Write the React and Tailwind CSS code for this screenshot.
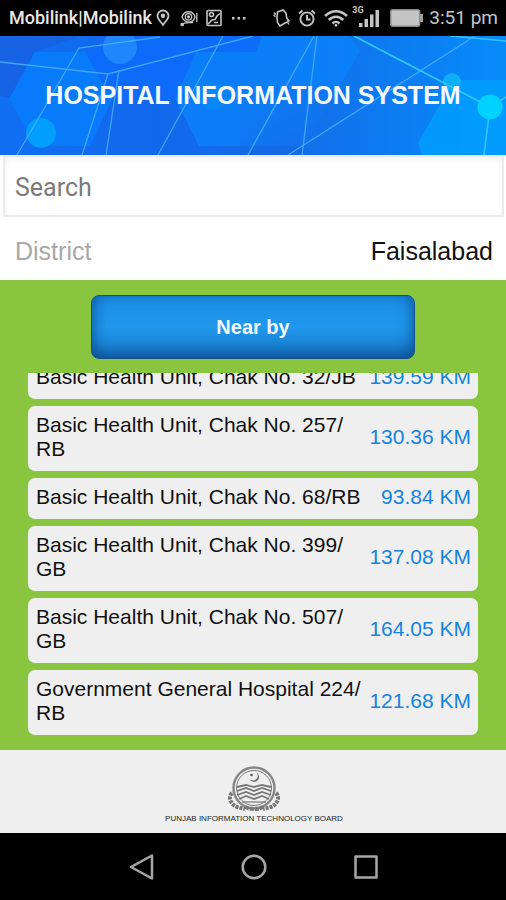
import React, { useLayoutEffect, useRef, useState } from 'react';

const hospitals = [
    { name: 'Basic Health Unit, Chak No. 32/JB', distance: '139.59 KM' },
    { name: 'Basic Health Unit, Chak No. 257/ RB', distance: '130.36 KM' },
    { name: 'Basic Health Unit, Chak No. 68/RB', distance: '93.84 KM' },
    { name: 'Basic Health Unit, Chak No. 399/ GB', distance: '137.08 KM' },
    { name: 'Basic Health Unit, Chak No. 507/ GB', distance: '164.05 KM' },
    { name: 'Government General Hospital 224/ RB', distance: '121.68 KM' },
];

const StatusBar = () => (
    <div className="flex h-9 shrink-0 items-center justify-between bg-black pl-[9px] pr-2 font-['Roboto',sans-serif] text-[#c4c4c4]">
        <div className="flex items-center">
            <span className="text-[18px] leading-6 font-medium text-[#e8e8e8]">Mobilink|Mobilink</span>
            <svg className="ml-1 h-[18px] w-[14px]" viewBox="0 0 14 18" fill="none" stroke="currentColor" strokeWidth="1.8">
                <path d="M7 16C5 13 1.500 10 1.500 7a5.500 5.500 0 0 1 11 0C12.500 10 9 13 7 16z" />
                <circle cx="7" cy="6.800" r="1.300" fill="currentColor" />
            </svg>
            <svg className="ml-2.5 h-[18px] w-[18px]" viewBox="0 0 18 18" fill="none" stroke="currentColor" strokeWidth="1.300">
                <path d="M2 8c2-7 11-7 13 0-2 7-10 6.500-13 0z" />
                <circle cx="8.500" cy="7.800" r="3.200" />
                <circle cx="8.500" cy="7.800" r="1" fill="currentColor" />
                <path d="M16.800 4v9M2 15.500c2-2.500 6-1.500 11-2" />
                <circle cx="2.200" cy="15.500" r="1.200" fill="currentColor" />
            </svg>
            <svg className="ml-2 h-[18px] w-4" viewBox="0 0 16 18" fill="none" stroke="currentColor" strokeWidth="1.600">
                <rect x="1" y="1.500" width="14" height="15" rx="1" />
                <circle cx="5.500" cy="5.500" r="2" />
                <path d="M2 15l4-4 3-.5 2-3.500L14 4.500M8 13.500h4" />
            </svg>
            <svg className="ml-2.5 h-[3px] w-[14px]" viewBox="0 0 14 3" fill="currentColor">
                <rect width="2.500" height="2.500" />
                <rect x="5.500" width="2.500" height="2.500" />
                <rect x="11" width="2.500" height="2.500" />
            </svg>
        </div>
        <div className="flex items-center">
            <svg className="h-[18px] w-[17px]" viewBox="0 0 17 18" fill="none" stroke="currentColor" strokeWidth="1.600">
                <path d="M4.500 3 10 1l3 3 .5 4 2 4.500L12 14l-5 3-2.500-3.500L4 9z" />
                <path d="M1 3.500 2.500 5 1 6.500 2.500 8M14.500 10l1.500 1.500-1.500 2 1.500 2" strokeWidth="1.200" />
            </svg>
            <svg className="ml-2 h-[18px] w-[18px]" viewBox="0 0 18 18" fill="none" stroke="currentColor" strokeWidth="1.900">
                <circle cx="9" cy="10" r="6.600" />
                <path d="M9 6v4.500h3.500M1 4.500 4.500 1.500M17 4.500l-3.500-3" />
            </svg>
            <svg className="ml-2 h-[18px] w-6" viewBox="0 0 24 18" fill="none" stroke="currentColor" strokeWidth="2.500">
                <path d="M1 7c6.500-6.500 15.500-6.500 22 0M4.800 11c4.300-4.300 10.100-4.300 14.400 0M8.500 14.500c2-2 5-2 7 0" />
                <circle cx="12" cy="16.300" r="1.400" fill="currentColor" stroke="none" />
            </svg>
            <div className="relative ml-1 h-6 w-7">
                <span className="absolute -top-0.5 left-0 text-[9px] leading-3 font-bold">3G</span>
                <svg className="h-full w-full" viewBox="0 0 28 24" fill="currentColor">
                    <path d="M7 17h3.500v4H7zM12.500 13h3.500v8h-3.500zM18 8.500h3.500v12.500H18zM23.500 4h3.500v17h-3.500z" />
                </svg>
            </div>
            <svg className="ml-2.5 h-[18px] w-[33px]" viewBox="0 0 33 18">
                <rect x=".7" y=".7" width="29" height="16.600" rx="2" fill="#c4c4c4" stroke="#8b8b8b" strokeWidth="1.400" />
                <path d="M30 5h3v8h-3z" fill="#a0a0a0" />
            </svg>
            <span className="ml-1.5 text-[19px] leading-6">3:51 pm</span>
        </div>
    </div>
);

const Header = () => (
    <header className="relative flex h-[119px] shrink-0 items-center justify-center overflow-hidden bg-[#0b6cf0] pb-0.5">
        <svg className="absolute inset-0 h-full w-full" viewBox="0 0 506 119" preserveAspectRatio="xMidYMid slice" fill="none">
            <defs>
                <linearGradient id="sky" x1="0" y1="0" x2="1" y2="0">
                    <stop offset="0" stopColor="#0f6ff2" />
                    <stop offset=".3" stopColor="#1268ec" />
                    <stop offset=".55" stopColor="#146ce8" />
                    <stop offset=".8" stopColor="#0c7df2" />
                    <stop offset="1" stopColor="#068cfa" />
                </linearGradient>
                <linearGradient id="shade" x1="0" y1="0" x2="1" y2="1">
                    <stop offset="0" stopColor="#1766e2" stopOpacity="0" />
                    <stop offset="1" stopColor="#1766e2" stopOpacity=".7" />
                </linearGradient>
            </defs>
            <rect width="506" height="119" fill="url(#sky)" />
            <path d="M0 0h80L35 16 10 62 0 60z" fill="#1a5fe0" opacity=".7" />
            <path d="M85 16 140 0h122l-6 16h-60l-21 47-63 0z" fill="#0a6cff" opacity=".7" />
            <path d="M35 16h50l27 47-22 47H37L9 63z" fill="#0580ff" opacity=".75" />
            <path d="M196 16h60l6-16h88l10 15-55 95H199l-24-47z" fill="#0a84fb" opacity=".75" />
            <path d="M240 50h100l-40 69h-60z" fill="url(#shade)" />
            <path d="M446 58l8-14h52v75h-84l-4-12z" fill="#00a0ff" opacity=".75" />
            <circle cx="120" cy="11" r="17" fill="#2f97ff" opacity=".6" />
            <circle cx="41" cy="97" r="15" fill="#00a8ff" opacity=".8" />
            <circle cx="213" cy="60" r="14" fill="#0c8cf8" opacity=".6" />
            <circle cx="452" cy="46" r="9" fill="#10b4fa" opacity=".85" />
            <g stroke="#4db4ff" strokeWidth="1.300" opacity=".8">
                <path d="M0 26 108 38 253 0M17 119 79 12 160 1M108 38 82 119M119 34l-13 85M223 0l-65 119M314 0l-66 119M317 0l-15 119M288 119 475 0" />
            </g>
            <g stroke="#31c5ff" strokeWidth="1.700">
                <path d="M354 0l136 71 16-10M490 71l-6 48M450 0l56 5" />
            </g>
            <circle cx="490" cy="71" r="12.500" fill="#00d2ff" />
        </svg>
        <h1 className="relative text-[25px] leading-8 font-bold text-[#f4f8ff]">HOSPITAL INFORMATION SYSTEM</h1>
    </header>
);

const HospitalList = () => {
    const listRef = useRef(null);

    useLayoutEffect(() => {
        listRef.current.scrollTop = listRef.current.scrollHeight;
    }, []);

    return (
        <ul ref={listRef} className="flex min-h-0 flex-1 flex-col gap-[7px] overflow-y-auto [scrollbar-width:none]">
            {hospitals.map((hospital) => (
                <li
                    key={hospital.name}
                    className="flex shrink-0 items-center justify-between rounded-[7px] bg-[#efefef] pt-[7px] pr-[7px] pb-2.5 pl-2 text-[21px] leading-6"
                >
                    <span className="max-w-[332px] text-[#111111]">{hospital.name}</span>
                    <span className="shrink-0 text-[#1683e0]">{hospital.distance}</span>
                </li>
            ))}
        </ul>
    );
};

const Emblem = () => (
    <svg className="h-[46px] w-[52px]" viewBox="0 0 52 46" fill="none" stroke="#777">
        <circle cx="26" cy="22" r="20.500" strokeWidth="2.400" stroke="#858585" />
        <circle cx="26" cy="22" r="17.500" strokeWidth="1" />
        <path d="M28.500 6.500a5 5 0 1 1-7 6.500 4.500 4.500 0 0 0 7-6.500z" fill="#666" stroke="none" />
        <circle cx="23.500" cy="9" r="1.300" fill="#555" stroke="none" />
        <path d="M9 21l9-2 8 2 8-2 9 2M9 25l9-3 8 3 8-3 9 3M9 29l9-3 8 3 8-3 9 3M11 33l7-3 8 3 8-3 7 3" strokeWidth="1.800" />
        <path d="M14 36h24" strokeWidth="1.200" />
        <path d="M4 27c-4 4-2 11 5 14l8 2M48 27c4 4 2 11-5 14l-8 2" strokeWidth="4" strokeDasharray="3 1" />
        <path d="M17 41q9 4 18 0" strokeWidth="4" strokeDasharray="4 1" />
    </svg>
);

const NavBar = () => (
    <nav className="grid h-[67px] shrink-0 grid-cols-3 items-center bg-black pr-[84px] pl-[86px] text-[#a6a6a6]">
        <button type="button" aria-label="Back" className="mx-auto">
            <svg className="h-7 w-7" viewBox="0 0 28 28" fill="none" stroke="currentColor" strokeWidth="2.500" strokeLinejoin="round">
                <path d="M24 2.500v23L3 14z" />
            </svg>
        </button>
        <button type="button" aria-label="Home" className="mx-auto">
            <svg className="h-7 w-7" viewBox="0 0 28 28" fill="none" stroke="currentColor" strokeWidth="2.500">
                <circle cx="14" cy="14" r="11.300" />
            </svg>
        </button>
        <button type="button" aria-label="Recent apps" className="mx-auto">
            <svg className="h-7 w-7" viewBox="0 0 28 28" fill="none" stroke="currentColor" strokeWidth="2.500" strokeLinejoin="round">
                <rect x="3.500" y="3.500" width="21" height="21" />
            </svg>
        </button>
    </nav>
);

const App = () => {
    const [search, setSearch] = useState('');
    const [district, setDistrict] = useState('Faisalabad');

    return (
        <div className="flex h-screen flex-col bg-white font-['Liberation_Sans',Arial,sans-serif]">
            <StatusBar />
            <Header />
            <div className="shrink-0 pr-0.5 pl-[3px]">
                <input
                    type="text"
                    aria-label="Search"
                    placeholder="Search"
                    value={search}
                    onChange={(e) => setSearch(e.target.value)}
                    className="block h-[62px] w-full border-2 border-[#ebebeb] bg-white px-2.5 pt-0.5 font-['Roboto',sans-serif] text-[25px] text-[#333333] shadow-[inset_0_2px_6px_#f0f0f0] outline-none placeholder:text-[#7b7b7b]"
                />
            </div>
            <div className="flex h-[63px] shrink-0 items-center justify-between pt-1 pr-[13px] pl-[15px] text-[25px] leading-8">
                <label htmlFor="district" className="text-[#a8a8a8]">District</label>
                <select
                    id="district"
                    value={district}
                    onChange={(e) => setDistrict(e.target.value)}
                    className="appearance-none bg-transparent text-right text-[#111111] outline-none"
                >
                    <option value="Faisalabad">Faisalabad</option>
                </select>
            </div>
            <main className="flex min-h-0 flex-1 flex-col bg-[#89c53f] px-7 py-[15px]">
                <button
                    type="button"
                    className="mx-auto mb-3.5 h-16 w-[324px] shrink-0 rounded-lg border border-[#14508c] bg-linear-to-b from-[#1c8fe8] via-[#1f97ec] to-[#187ccc] text-[20px] font-bold text-[#f0f7ff] shadow-[inset_0_-4px_16px_#0b4a8c]"
                >
                    Near by
                </button>
                <HospitalList />
            </main>
            <footer className="flex h-[83px] shrink-0 flex-col items-center bg-[#efefef] pt-4 pl-0.5">
                <Emblem />
                <p className="mt-0.5 text-[8px] leading-[10px] font-medium text-[#222222]">PUNJAB INFORMATION TECHNOLOGY BOARD</p>
            </footer>
            <NavBar />
        </div>
    );
};

export default App;
